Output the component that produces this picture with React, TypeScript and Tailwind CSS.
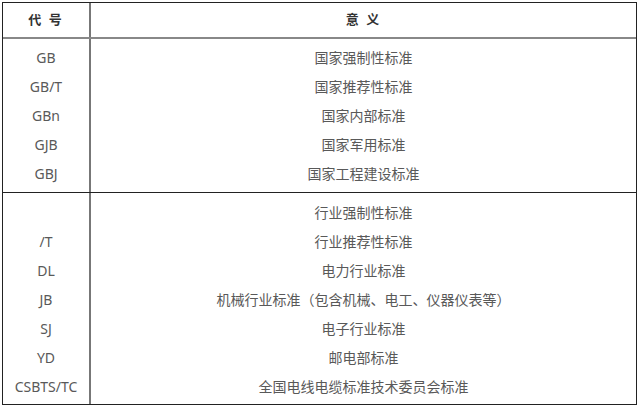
const font = { fontFamily: '"Noto Sans", "Noto Sans CJK SC", sans-serif' };

const national = [
  ['GB', '国家强制性标准'],
  ['GB/T', '国家推荐性标准'],
  ['GBn', '国家内部标准'],
  ['GJB', '国家军用标准'],
  ['GBJ', '国家工程建设标准'],
];

const industry = [
  ['', '行业强制性标准'],
  ['/T', '行业推荐性标准'],
  ['DL', '电力行业标准'],
  ['JB', '机械行业标准（包含机械、电工、仪器仪表等）'],
  ['SJ', '电子行业标准'],
  ['YD', '邮电部标准'],
  ['CSBTS/TC', '全国电线电缆标准技术委员会标准'],
];

const Section = ({ rows, last }: { rows: string[][]; last?: boolean }) => {
  const pad = last ? 'pt-[5px] pb-[3px]' : 'py-[4px]';
  return (
    <div className={`flex ${last ? '' : 'border-b border-[#222]'}`}>
      <div className={`w-[88px] shrink-0 border-r-2 border-[#777] ${pad}`}>
        {rows.map(([code], i) => (
          <div key={i} className="h-[29px] flex items-center justify-center">
            {code}
          </div>
        ))}
      </div>
      <div className={`flex-1 ${pad}`}>
        {rows.map(([, meaning], i) => (
          <div key={i} className="h-[29px] flex items-center justify-center">
            {meaning}
          </div>
        ))}
      </div>
    </div>
  );
};

export default function App() {
  return (
    <div className="w-[640px] h-[407px] bg-white pt-[2px] pl-[2px]" style={font}>
      <div className="w-[635px] border border-[#222] text-[14px] text-[#595959]">
        <div className="flex h-[36px] border-b-2 border-[#888] font-bold text-[#333] text-[13px]">
          <div className="w-[88px] shrink-0 border-r-2 border-[#777] flex items-center justify-center tracking-[2px]">
            代 号
          </div>
          <div className="flex-1 flex items-center justify-center tracking-[2px]">意 义</div>
        </div>
        <Section rows={national} />
        <Section rows={industry} last />
      </div>
    </div>
  );
}
